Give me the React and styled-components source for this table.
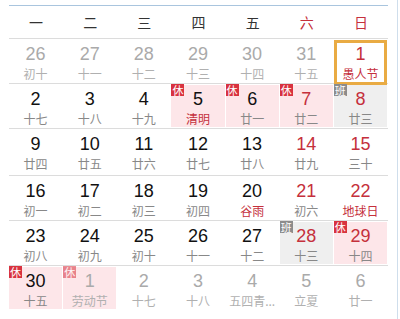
import React from 'react'
import styled, { createGlobalStyle, css } from 'styled-components'

const RED = '#c5303c'
const CJK = '"Noto Sans CJK SC", "Noto Sans", sans-serif'

const GlobalStyle = createGlobalStyle`
  body {
    margin: 0;
    background: #fff;
    font-family: ${CJK};
  }
`

// * Layout
const Page = styled.div`
  width: 398px;
  height: 319px;
  border-right: 1px solid #cfdeec;
  overflow: hidden;
  padding: 5px 0 0 9px;
  box-sizing: border-box;
`

const Board = styled.div`
  width: 379px;
  border-top: 1px solid #a9c5de;
`

const WeekHead = styled.div`
  display: grid;
  grid-template-columns: repeat(7, 1fr);
  height: 32px;
  align-items: center;
  border-bottom: 1px solid #dcdcdc;
`

const WeekName = styled.div`
  text-align: center;
  font-size: 14px;
  color: ${(props) => (props.$weekend ? RED : '#333')};
`

const Week = styled.div`
  display: grid;
  grid-template-columns: repeat(7, 1fr);
  height: ${(props) => props.$h}px;
  border-bottom: ${(props) => (props.$last ? 'none' : '1px solid #dcdcdc')};
  box-sizing: content-box;
`

const Cell = styled.div`
  position: relative;
  margin: 1px 1px 1px 0;
  padding-top: 4px;
  text-align: center;
  box-sizing: border-box;
  background: ${(props) =>
    props.$tag === 'rest' ? '#fde6e9' : props.$tag === 'work' ? '#efefef' : 'transparent'};
  ${(props) =>
    props.$today &&
    css`
      border: 3px solid #e9ab43;
      padding-top: 1px;
    `}
`

const Num = styled.div`
  font-family: "Liberation Sans", Arial, sans-serif;
  font-size: 18px;
  line-height: 20px;
  color: ${(props) => (props.$other ? '#aaa' : props.$red ? RED : '#111')};
`

const Lunar = styled.div`
  margin-top: 2px;
  font-size: 12px;
  line-height: 16px;
  white-space: nowrap;
  color: ${(props) => (props.$other ? '#b0b0b0' : props.$fest ? RED : '#888')};
`

const Badge = styled.span`
  position: absolute;
  left: 0;
  top: -1px;
  width: 13px;
  height: 12px;
  font-size: 11px;
  line-height: 12px;
  text-align: center;
  color: #fff;
  background: ${(props) => (props.$tag === 'rest' ? '#d8323f' : '#8c8c8c')};
  opacity: ${(props) => (props.$other ? 0.55 : 1)};
`

// o = other month, r = red number, f = festival text, t = tag, today
const weeks = [
  [
    { d: 26, l: '初十', o: 1 },
    { d: 27, l: '十一', o: 1 },
    { d: 28, l: '十二', o: 1 },
    { d: 29, l: '十三', o: 1 },
    { d: 30, l: '十四', o: 1 },
    { d: 31, l: '十五', o: 1 },
    { d: 1, l: '愚人节', r: 1, f: 1, today: 1 },
  ],
  [
    { d: 2, l: '十七' },
    { d: 3, l: '十八' },
    { d: 4, l: '十九' },
    { d: 5, l: '清明', f: 1, t: 'rest' },
    { d: 6, l: '廿一', t: 'rest' },
    { d: 7, l: '廿二', r: 1, t: 'rest' },
    { d: 8, l: '廿三', r: 1, t: 'work' },
  ],
  [
    { d: 9, l: '廿四' },
    { d: 10, l: '廿五' },
    { d: 11, l: '廿六' },
    { d: 12, l: '廿七' },
    { d: 13, l: '廿八' },
    { d: 14, l: '廿九', r: 1 },
    { d: 15, l: '三十', r: 1 },
  ],
  [
    { d: 16, l: '初一' },
    { d: 17, l: '初二' },
    { d: 18, l: '初三' },
    { d: 19, l: '初四' },
    { d: 20, l: '谷雨', f: 1 },
    { d: 21, l: '初六', r: 1 },
    { d: 22, l: '地球日', r: 1, f: 1 },
  ],
  [
    { d: 23, l: '初八' },
    { d: 24, l: '初九' },
    { d: 25, l: '初十' },
    { d: 26, l: '十一' },
    { d: 27, l: '十二' },
    { d: 28, l: '十三', r: 1, t: 'work' },
    { d: 29, l: '十四', r: 1, t: 'rest' },
  ],
  [
    { d: 30, l: '十五', t: 'rest' },
    { d: 1, l: '劳动节', o: 1, t: 'rest' },
    { d: 2, l: '十七', o: 1 },
    { d: 3, l: '十八', o: 1 },
    { d: 4, l: '五四青...', o: 1 },
    { d: 5, l: '立夏', o: 1 },
    { d: 6, l: '廿一', o: 1 },
  ],
]

const heights = [44, 44, 46, 44, 44, 44]
const names = ['一', '二', '三', '四', '五', '六', '日']

export default function App() {
  return (
    <Page>
      <GlobalStyle />
      <Board>
        <WeekHead>
          {names.map((n, i) => (
            <WeekName key={n} $weekend={i > 4}>
              {n}
            </WeekName>
          ))}
        </WeekHead>
        {weeks.map((week, wi) => (
          <Week key={wi} $h={heights[wi]} $last={wi === weeks.length - 1}>
            {week.map((day, di) => (
              <Cell key={di} $tag={day.t} $today={day.today}>
                {day.t && (
                  <Badge $tag={day.t} $other={day.o}>
                    {day.t === 'rest' ? '休' : '班'}
                  </Badge>
                )}
                <Num $other={day.o} $red={day.r}>
                  {day.d}
                </Num>
                <Lunar $other={day.o} $fest={day.f}>
                  {day.l}
                </Lunar>
              </Cell>
            ))}
          </Week>
        ))}
      </Board>
    </Page>
  )
}
